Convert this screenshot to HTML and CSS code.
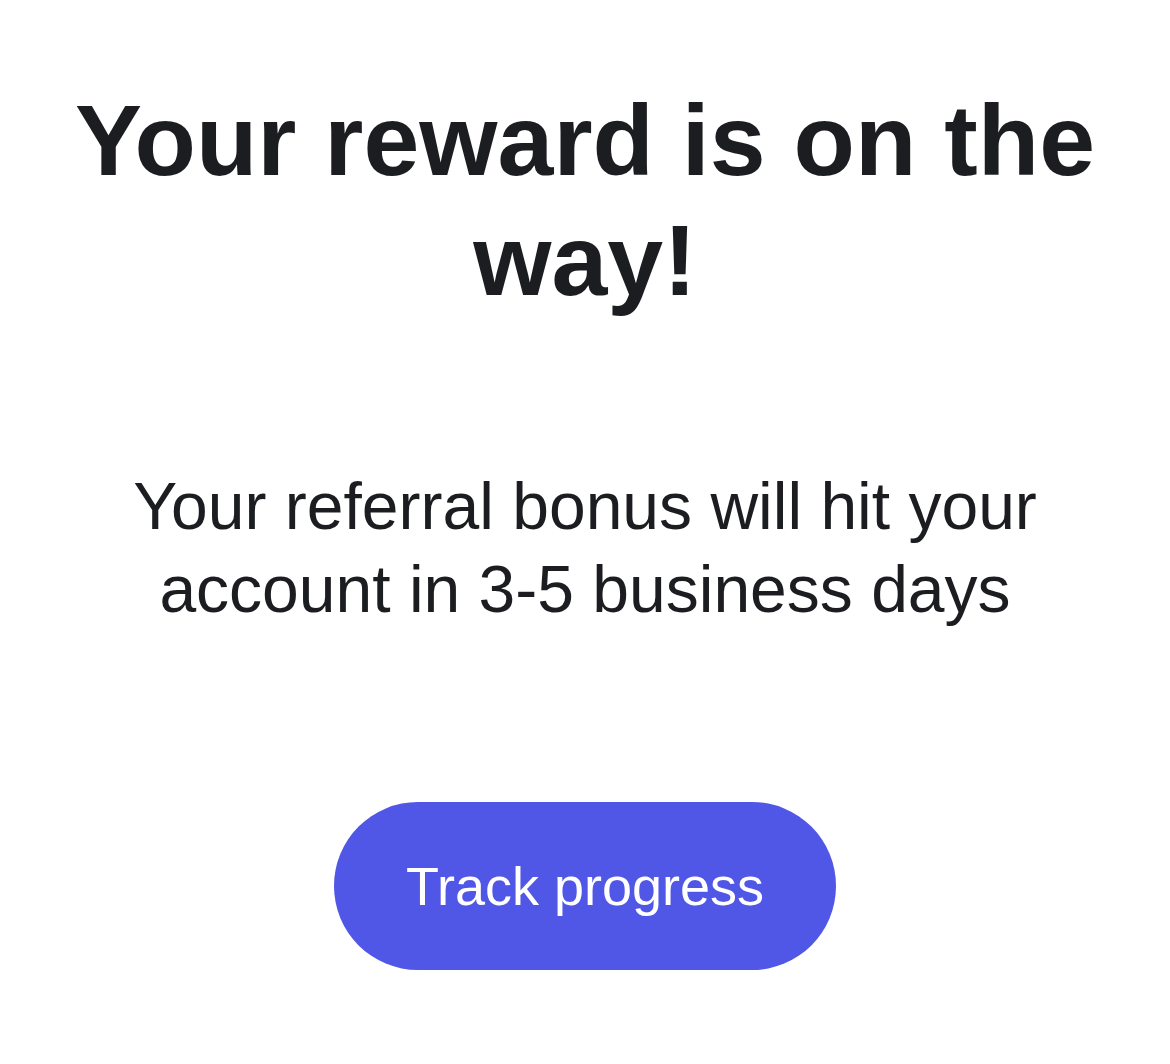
FILE: index.html
```html
<!DOCTYPE html>
<html lang="en">
<head>
    <meta charset="UTF-8">
    <meta name="viewport" content="width=device-width, initial-scale=1.0">
    <title>Reward on the way</title>
    <link rel="stylesheet" href="styles.css">
</head>
<body>
    <main class="reward">
        <h1 class="reward-title">Your reward is on the way!</h1>
        <p class="reward-text">Your referral bonus will hit your account in 3-5 business days</p>
        <a href="#" class="track-button">Track progress</a>
    </main>
</body>
</html>
```

FILE: styles.css
```css
body { margin: 0; background: #fff; color: #1c1d21; font-family: 'Liberation Sans', Arial, sans-serif; }
.reward { display: flex; flex-direction: column; align-items: center; text-align: center; padding: 80px 40px 0; }
.reward-title { margin: 0; font-size: 100.5px; line-height: 120px; font-weight: bold; }
.reward-text { margin: 145px 0 0; max-width: 960px; font-size: 66px; line-height: 83px; }
.track-button {
    margin-top: 171px;
    display: flex;
    align-items: center;
    justify-content: center;
    width: 502px;
    height: 168px;
    border-radius: 84px;
    background: #5056e6;
    color: #fff;
    font-size: 54px;
    text-decoration: none;
}
```
